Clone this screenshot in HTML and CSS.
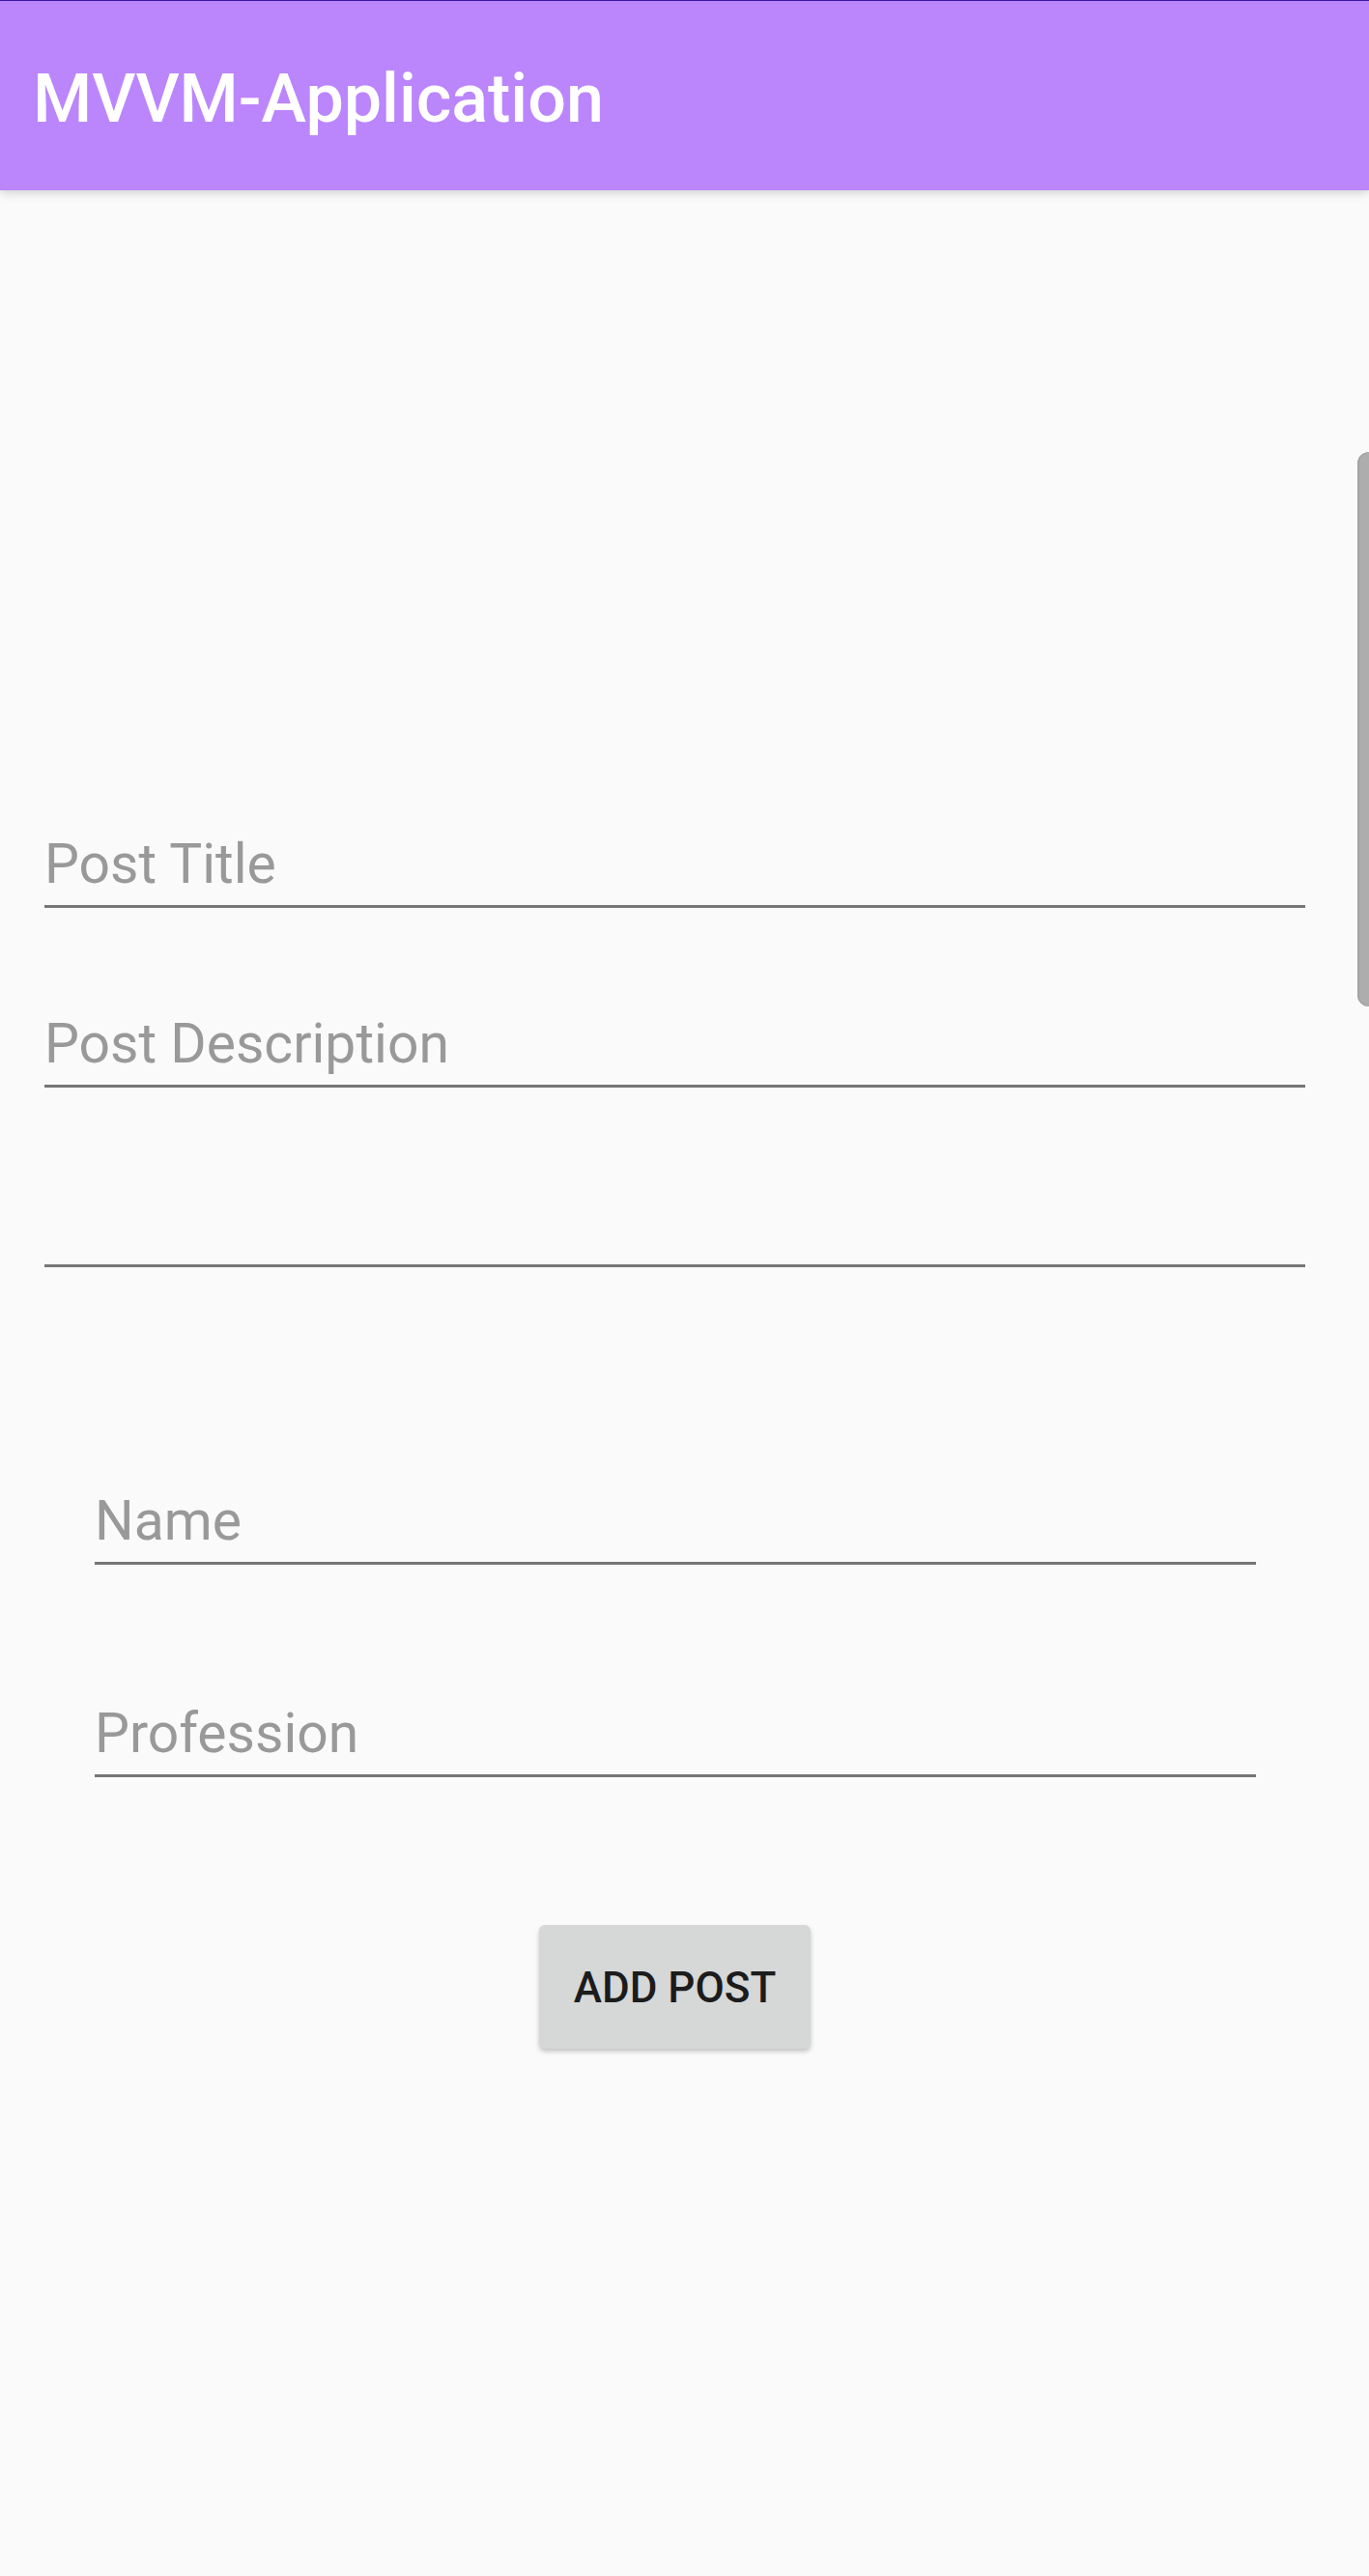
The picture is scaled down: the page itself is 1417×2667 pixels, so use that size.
FILE: index.html
```html
<!DOCTYPE html>
<html lang="en">
<head>
<meta charset="utf-8">
<title>MVVM-Application</title>
<link rel="stylesheet" href="styles.css">
</head>
<body>
<div class="screen">
  <header class="appbar">
    <h1 class="appbar-title">MVVM-Application</h1>
  </header>
  <main class="content">
    <div class="group group-wide">
      <div class="field"><span class="hint">Post Title</span></div>
      <div class="field field-gap"><span class="hint">Post Description</span></div>
      <div class="field field-gap"><span class="hint"></span></div>
    </div>
    <div class="group group-narrow">
      <div class="field"><span class="hint">Name</span></div>
      <div class="field field-gap-lg"><span class="hint">Profession</span></div>
    </div>
    <div class="group group-wide actions">
      <button class="btn" type="button">ADD POST</button>
    </div>
  </main>
  <div class="fast-scroll"></div>
</div>
</body>
</html>
```

FILE: styles.css
```css
html, body {
  margin: 0;
  padding: 0;
  background: #fafafa;
}

.screen {
  position: relative;
  width: 1417px;
  min-height: 2667px;
  background: #fafafa;
  font-family: Roboto, "Noto Sans", "Liberation Sans", sans-serif;
  overflow: hidden;
}

.appbar {
  position: relative;
  z-index: 1;
  height: 196px;
  border-top: 1px solid #3a16a6;
  background: #bb86fc;
  box-shadow: 0 3px 9px rgba(0, 0, 0, 0.16);
  display: flex;
  align-items: center;
  padding-left: 34px;
}

.appbar-title {
  margin: 0;
  color: #ffffff;
  font-size: 70px;
  font-weight: 500;
  line-height: 82px;
  padding-top: 6px;
}

.content {
  display: flex;
  flex-direction: column;
  padding-top: 665px;
}

.group {
  display: flex;
  flex-direction: column;
}

.group-wide {
  margin: 0 66px 0 46px;
}

.group-narrow {
  margin: 230px 117px 0 98px;
}

.field {
  border-bottom: 3px solid #767676;
  padding-bottom: 9px;
}

.field-gap {
  margin-top: 108px;
}

.field-gap-lg {
  margin-top: 142px;
}

.hint {
  display: block;
  min-height: 66px;
  font-size: 57px;
  line-height: 66px;
  color: #999999;
}

.actions {
  margin-top: 153px;
  align-items: center;
}

.btn {
  width: 281px;
  height: 128px;
  border: none;
  border-radius: 6px;
  background: #d6d7d7;
  color: #1c1c1c;
  font-family: Roboto, "Noto Sans", "Liberation Sans", sans-serif;
  font-size: 44px;
  font-weight: 500;
  letter-spacing: 0;
  box-shadow: 0 3px 5px rgba(0, 0, 0, 0.22);
  padding: 2px 0 0;
}

.fast-scroll {
  position: absolute;
  right: 0;
  top: 468px;
  width: 12px;
  height: 574px;
  background: #adadad;
  border-radius: 12px 0 0 12px;
  box-shadow: inset 2px 0 0 #a2a2a2;
}
```
